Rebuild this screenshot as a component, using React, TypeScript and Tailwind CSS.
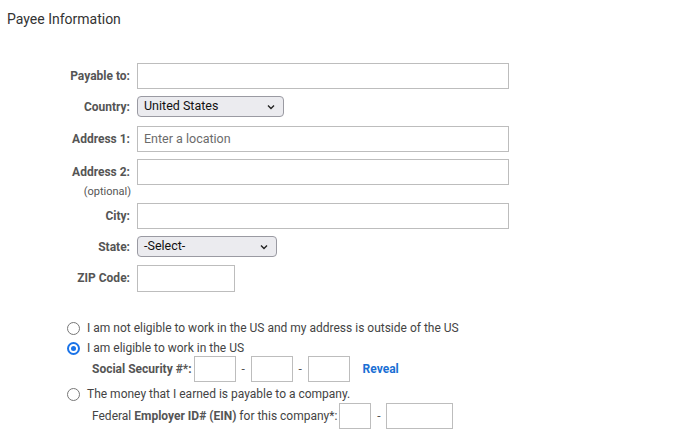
import React from "react";

const Label = ({ children }: { children: React.ReactNode }) => (
  <div className="w-[130px] shrink-0 text-right text-[12px] font-bold text-[#555] leading-[26px]">
    {children}
  </div>
);

const TextBox = ({ w, h = 26, placeholder }: { w: number; h?: number; placeholder?: string }) => (
  <div
    className="border border-[#bdbdbd] bg-white flex items-center pl-[6px] text-[12.5px] text-[#6b6b6b]"
    style={{ width: w, height: h }}
  >
    {placeholder}
  </div>
);

const Select = ({ w, value }: { w: number; value: string }) => (
  <div
    className="h-[21px] rounded-[4px] border border-[#9a9aa2] bg-[#ebebef] flex items-center justify-between pl-[6px] pr-[8px] text-[12.5px] text-[#111]"
    style={{ width: w }}
  >
    <span>{value}</span>
    <svg width="8" height="6" viewBox="0 0 8 6">
      <path d="M1 1.5 L4 4.5 L7 1.5" fill="none" stroke="#222" strokeWidth="1.4" />
    </svg>
  </div>
);

const Radio = ({ checked }: { checked?: boolean }) =>
  checked ? (
    <span className="w-[13px] h-[13px] rounded-full border-[2px] border-[#1a73e8] flex items-center justify-center shrink-0">
      <span className="w-[5px] h-[5px] rounded-full bg-[#1a73e8]" />
    </span>
  ) : (
    <span className="w-[13px] h-[13px] rounded-full border-[1.5px] border-[#777] shrink-0" />
  );

const Box = ({ w }: { w: number }) => (
  <div className="h-[26px] border border-[#bdbdbd] bg-white" style={{ width: w }} />
);

const Dash = () => <span className="w-[15px] text-center text-[12px] text-[#555]">-</span>;

export default function App() {
  return (
    <div className="w-[682px] h-[446px] bg-white overflow-hidden" style={{ fontFamily: "Roboto, 'Liberation Sans', sans-serif" }}>
      <div className="pl-[7px] pt-[10px] text-[14px] leading-[18px] text-[#333]">Payee Information</div>

      <div className="mt-[35px] flex flex-col">
        <div className="flex gap-[7px] h-[26px]">
          <Label>Payable to:</Label>
          <TextBox w={372} />
        </div>
        <div className="flex gap-[7px] mt-[7px] h-[21px] items-center">
          <div className="w-[130px] shrink-0 text-right text-[12px] font-bold text-[#555]">Country:</div>
          <Select w={147} value="United States" />
        </div>
        <div className="flex gap-[7px] mt-[9px] h-[26px]">
          <Label>Address 1:</Label>
          <TextBox w={372} placeholder="Enter a location" />
        </div>
        <div className="flex gap-[7px] mt-[7px]">
          <div className="w-[130px] shrink-0 flex flex-col items-end">
            <div className="text-[12px] font-bold text-[#555] leading-[26px]">Address 2:</div>
            <div className="text-[11px] text-[#555] leading-[12px] mt-[1px] mr-[-1px]">(optional)</div>
          </div>
          <TextBox w={372} />
        </div>
        <div className="flex gap-[7px] mt-[5px] h-[26px]">
          <Label>City:</Label>
          <TextBox w={372} />
        </div>
        <div className="flex gap-[7px] mt-[7px] h-[21px] items-center">
          <div className="w-[130px] shrink-0 text-right text-[12px] font-bold text-[#555]">State:</div>
          <Select w={140} value="-Select-" />
        </div>
        <div className="flex gap-[7px] mt-[8px] h-[27px]">
          <div className="w-[130px] shrink-0 text-right text-[12px] font-bold text-[#555] leading-[27px]">ZIP Code:</div>
          <TextBox w={98} h={27} />
        </div>

        <div className="mt-[26px] pl-[67px] flex flex-col text-[12px] text-[#444]">
          <div className="flex items-center gap-[7px] h-[20px]">
            <Radio />
            <span>I am not eligible to work in the US and my address is outside of the US</span>
          </div>
          <div className="flex items-center gap-[7px] h-[20px]">
            <Radio checked />
            <span>I am eligible to work in the US</span>
          </div>
          <div className="flex items-center h-[26px] -mt-[2px] pl-[25px]">
            <span className="font-bold text-[#555] mr-[2px]">Social Security #*:</span>
            <Box w={42} />
            <Dash />
            <Box w={42} />
            <Dash />
            <Box w={42} />
            <span className="ml-[13px] font-bold text-[#1a6fd4]">Reveal</span>
          </div>
          <div className="flex items-center gap-[7px] h-[20px] mt-[2px]">
            <Radio />
            <span>The money that I earned is payable to a company.</span>
          </div>
          <div className="flex items-center h-[26px] -mt-[1px] pl-[25px]">
            <span className="mr-[2px]">
              Federal <span className="font-bold text-[#555]">Employer ID# (EIN)</span> for this company*:
            </span>
            <Box w={32} />
            <Dash />
            <Box w={67} />
          </div>
        </div>
      </div>
    </div>
  );
}
